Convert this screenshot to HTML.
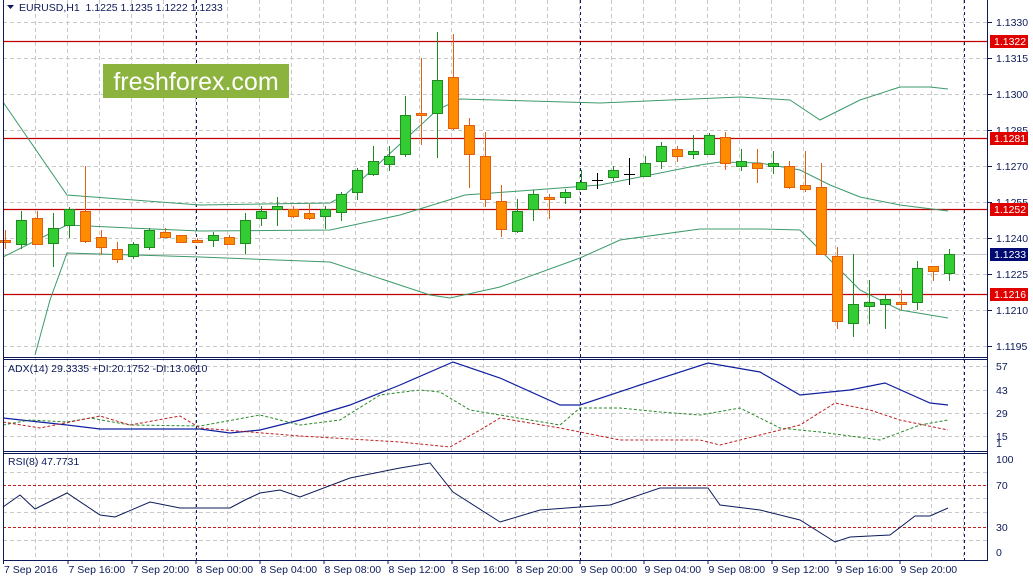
<!DOCTYPE html>
<html><head><meta charset="utf-8"><style>
html,body{margin:0;padding:0;background:#fff;width:1033px;height:583px;overflow:hidden}
svg{display:block}
text{font-family:"Liberation Sans",sans-serif;font-size:10.5px;fill:#0c1a5a}
</style></head><body>
<svg id="s" width="1033" height="583" xmlns="http://www.w3.org/2000/svg"></svg>
<script>
var o=[];
function L(x1,y1,x2,y2,c,w,d){o.push('<line x1="'+x1+'" y1="'+y1+'" x2="'+x2+'" y2="'+y2+'" stroke="'+c+'" stroke-width="'+(w||1)+'"'+(d?' stroke-dasharray="'+d+'"':'')+'/>');}
function P(pts,c,d,w){var s='';for(var i=0;i<pts.length;i+=2)s+=(i?'L':'M')+pts[i]+' '+pts[i+1];o.push('<path d="'+s+'" fill="none" stroke="'+c+'" stroke-width="'+(w||1)+'"'+(d?' stroke-dasharray="'+d+'"':'')+'/>');}
function T(x,y,t,a){o.push('<text x="'+x+'" y="'+y+'"'+(a||'')+'>'+t+'</text>');}
// grid verticals
for(var x=35;x<987;x+=32){L(x+.5,0,x+.5,560,'#c8c8c8',1,'4 3');}
// horizontal grid main
for(var y=22;y<357;y+=36)L(3,y+.5,987,y+.5,'#c8c8c8',1,'4 3');
[366,390,413,436].forEach(function(y){L(3,y+.5,987,y+.5,'#c8c8c8',1,'4 3');});
[472,498,512,540].forEach(function(y){L(3,y+.5,987,y+.5,'#c8c8c8',1,'4 3');});
// navy dashed verticals
[196,580,964].forEach(function(x){L(x+.5,0,x+.5,560,'#0c1a5a',1,'3 3');});
// gray current line
L(3,254.5,987,254.5,'#c8c8c8',1);
// red levels
[41,138,209,294].forEach(function(y){L(3,y+.5,987,y+.5,'#c00000',1.2);});
// bollinger
var g='#3c9a6a';
P([3,102,67,195,200,205,330,203,345,195,437,110,460,99,600,103,740,97,790,100,820,120,860,100,900,87,930,87,948,89],g);
P([3,257,67,225,130,228,200,231,330,230,400,215,465,195,600,185,700,165,720,162,760,163,800,170,830,185,860,197,900,205,948,211],g);
P([35,355,50,300,67,253,200,257,330,262,430,295,450,298,500,287,580,258,620,240,700,229,760,229,800,230,820,250,860,290,900,310,948,318],g);
// candles
var C=[[5,'o',240,242,230,249],[21,'g',220,244,211,249],[37,'o',218,244,211,244],[53,'g',228,243,213,267],[69,'g',209,225,207,238],[85,'o',211,241,166,243],[101,'o',237,247,230,255],[117,'o',249,259,242,263],[133,'g',244,256,242,259],[149,'g',230,247,228,250],[165,'o',232,237,228,237],[181,'o',235,242,235,243],[197,'o',240,242,238,243],[213,'g',235,240,232,247],[229,'o',237,244,235,244],[245,'g',220,243,213,254],[261,'g',211,218,206,226],[277,'g',206,209,197,226],[293,'o',209,216,206,218],[309,'o',213,218,204,220],[325,'g',209,216,206,229],[341,'g',194,212,192,221],[357,'g',170,192,168,200],[373,'g',161,174,146,176],[389,'g',156,164,146,171],[405,'g',115,154,96,157],[421,'o',113,115,58,145],[437,'g',80,113,32,158],[453,'o',77,128,34,130],[469,'o',125,154,118,188],[485,'o',156,199,132,207],[501,'o',201,229,185,237],[517,'g',211,231,199,233],[533,'g',194,209,190,221],[549,'o',197,199,194,219],[565,'g',192,197,189,204],[581,'g',182,189,170,190],[597,'x',180,180,173,189],[613,'g',170,177,166,181],[629,'x',174,174,158,185],[645,'g',163,176,156,177],[661,'g',146,161,142,169],[677,'o',149,156,146,162],[693,'g',151,154,135,159],[709,'g',135,154,133,155],[725,'o',137,163,132,170],[741,'g',161,166,149,171],[757,'o',163,168,149,183],[773,'g',163,166,151,174],[789,'o',166,187,161,189],[805,'o',185,189,151,192],[821,'o',187,254,163,254],[837,'o',256,321,247,329],[853,'g',304,323,254,337],[869,'g',302,306,280,324],[885,'g',299,304,295,329],[901,'o',302,304,290,310],[917,'g',268,302,261,310],[933,'o',266,271,266,281],[949,'g',254,273,249,281]];
C.forEach(function(c){var x=c[0];
 if(c[1]=='x'){L(x+.5,c[4],x+.5,c[5],'#000');L(x-5,c[2]+.5,x+6,c[2]+.5,'#000');return;}
 var s=c[1]=='g'?'#1f8a1f':'#e06010',f=c[1]=='g'?'#33cc33':'#ff8c00';
 L(x+.5,c[4],x+.5,c[5],s);
 var h=Math.max(c[3]-c[2],2);
 o.push('<rect x="'+(x-4.5)+'" y="'+(c[2]+.5)+'" width="10" height="'+h+'" fill="'+f+'" stroke="'+s+'"/>');});
// logo
o.push('<rect x="103" y="64" width="186" height="34" fill="#8cb33d"/>');
o.push('<text x="196" y="90" text-anchor="middle" style="font-size:25px;fill:#fff">freshforex.com</text>');
// header
o.push('<path d="M7 5h7l-3.5 4z" fill="#0c1a5a"/>');
T(19,11,'EURUSD,H1&#160; 1.1225 1.1235 1.1222 1.1233','');
// ADX
P([3,418,67,425,100,429,200,429,230,433,260,430,300,420,350,405,400,385,453,362,500,378,560,405,580,405,640,385,708,363,760,372,800,395,850,390,885,383,930,403,948,405],'#1020a0',0,1.2);
P([3,425,30,420,67,422,90,418,130,425,200,426,260,415,300,425,340,420,380,395,420,390,440,392,470,410,500,415,560,425,580,408,620,408,660,412,700,415,740,408,780,428,820,432,880,440,920,425,948,420],'#2a8a2a','3 2');
P([3,422,40,428,100,416,130,425,180,416,200,428,300,436,400,442,450,447,480,430,500,418,560,428,620,440,700,440,720,445,760,435,800,425,835,403,870,410,900,420,948,430],'#c02020','3 2');
T(8,372,'ADX(14) 29.3335 +DI:20.1752 -DI:13.0610');
// RSI
L(3,485.5,987,485.5,'#c02020',1,'3 2');L(3,527.5,987,527.5,'#c02020',1,'3 2');
P([3,507,20,495,35,509,67,493,100,515,115,517,150,502,180,508,230,508,245,500,260,493,280,490,300,497,350,478,400,468,430,463,453,492,500,522,540,510,580,507,610,505,660,488,708,488,720,505,760,510,800,520,835,542,850,537,890,535,915,516,930,516,948,508],'#0c1a5a');
T(8,465,'RSI(8) 47.7731');
// borders
L(3.5,0,3.5,560,'#0c1a5a');L(987.5,0,987.5,560,'#0c1a5a');
L(3,357.5,988,357.5,'#0c1a5a');L(3,359.5,988,359.5,'#0c1a5a');
L(3,451.5,988,451.5,'#0c1a5a');L(3,453.5,988,453.5,'#0c1a5a');
L(3,560.5,988,560.5,'#0c1a5a');
// right axis labels
var pl=[[22,'1.1330'],[58,'1.1315'],[94,'1.1300'],[130,'1.1285'],[166,'1.1270'],[202,'1.1255'],[238,'1.1240'],[274,'1.1225'],[310,'1.1210'],[346,'1.1195']];
pl.forEach(function(p){L(988,p[0]+.5,992,p[0]+.5,'#0c1a5a');T(996,p[0]+4,p[1]);});
[[41,'1.1322','#e00000'],[138,'1.1281','#e00000'],[209,'1.1252','#e00000'],[294,'1.1216','#e00000'],[254,'1.1233','#000a70']].forEach(function(p){
 o.push('<rect x="990" y="'+(p[0]-6)+'" width="38" height="13" fill="'+p[2]+'"/>');T(994,p[0]+4,p[1],' style="fill:#fff"');});
[[366,'57'],[390,'43'],[413,'29'],[436,'15'],[443,'1']].forEach(function(p){T(996,p[0]+4,p[1]);});
[[459,'100'],[485,'70'],[527,'30'],[552,'0']].forEach(function(p){T(996,p[0]+4,p[1]);});
// time axis
var tl=['7 Sep 2016','7 Sep 16:00','7 Sep 20:00','8 Sep 00:00','8 Sep 04:00','8 Sep 08:00','8 Sep 12:00','8 Sep 16:00','8 Sep 20:00','9 Sep 00:00','9 Sep 04:00','9 Sep 08:00','9 Sep 12:00','9 Sep 16:00','9 Sep 20:00'];
tl.forEach(function(t,i){var x=3+64*i+(i?0.5:0);L(x+.5,560,x+.5,564,'#0c1a5a');T(x+1,573,t);});
document.getElementById('s').innerHTML=o.join('');
</script>
</body></html>
